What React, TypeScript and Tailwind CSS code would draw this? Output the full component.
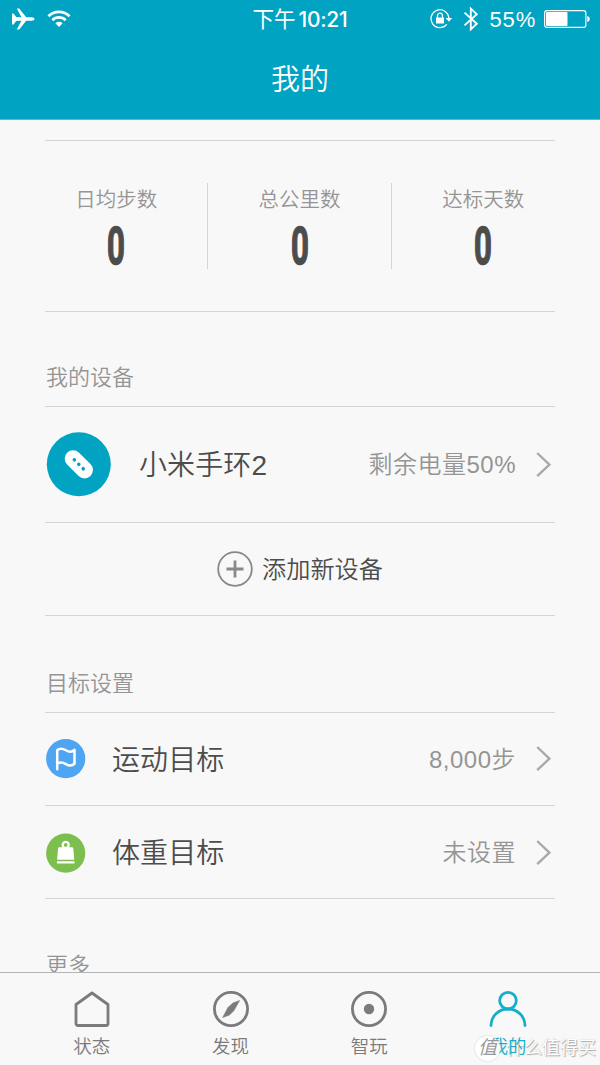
import type { ReactNode } from 'react';

const stats = [
  { label: '日均步数', value: '0' },
  { label: '总公里数', value: '0' },
  { label: '达标天数', value: '0' },
];

function AirplaneIcon() {
  return (
    <svg width="24" height="22" viewBox="0 0 24 22" fill="#fff">
      <path d="M1 5.500h1.600l2.600 3.600 5.200.2L5.800.4h2.400l7 8.900h5.600c1.600 0 2.700.8 2.700 1.700s-1.100 1.700-2.700 1.700h-5.600l-7 8.700H5.800l4.600-8.600-5.200.1-2.600 3.600H1V5.500z" />
    </svg>
  );
}

function WifiIcon() {
  return (
    <svg width="24" height="18" viewBox="0 0 24 18" fill="none" stroke="#fff">
      <path d="M1.400 6.300a15 15 0 0 1 21.200 0" strokeWidth="2.700" />
      <path d="M5.300 10.200a9.500 9.500 0 0 1 13.400 0" strokeWidth="2.700" />
      <path d="M8.400 13.300a5.100 5.100 0 0 1 7.200 0L12 17z" fill="#fff" stroke="none" />
    </svg>
  );
}

function RotationLockIcon() {
  return (
    <svg width="23" height="20" viewBox="0 0 23 20" fill="none">
      <path d="M16.800 15.300a8.900 8.900 0 1 1 2-6.300" stroke="#fff" strokeWidth="1.300" />
      <path d="M15.600 9h6.600l-3.300 3.700z" fill="#fff" />
      <rect x="6" y="8.500" width="8" height="6" rx=".5" fill="#fff" />
      <path d="M7.500 9V6.700a2.500 2.500 0 0 1 5 0V9" stroke="#fff" strokeWidth="1.300" />
    </svg>
  );
}

function BluetoothIcon() {
  return (
    <svg width="16" height="26" viewBox="0 0 16 26" fill="none" stroke="#fff" strokeWidth="1.900">
      <path d="M1.500 6.600l12.300 11.200-6 5.600V2.600l6 5.600L1.500 19.400" />
    </svg>
  );
}

function BatteryIcon() {
  return (
    <svg width="46" height="18" viewBox="0 0 46 18" fill="none">
      <rect x=".6" y=".6" width="41.300" height="16.800" rx="2.400" stroke="#fff" strokeWidth="1.100" />
      <rect x="2" y="2" width="21.500" height="14" rx="1" fill="#fff" />
      <path d="M43.300 6c1.600.3 2.400 1.500 2.400 3s-.8 2.700-2.400 3z" fill="#fff" />
    </svg>
  );
}

function Chevron() {
  return (
    <svg className="ml-[20px] mr-[4px] shrink-0" width="15" height="26" viewBox="0 0 15 26" fill="none" stroke="#a8a8a8" strokeWidth="2.300">
      <path d="M1.200 1L13.400 12.600 1.200 24.200" />
    </svg>
  );
}

function BandIcon() {
  return (
    <svg width="66" height="66" viewBox="0 0 66 66">
      <circle cx="33.800" cy="32.300" r="32" fill="#00a3c1" />
      <g transform="rotate(45 33.800 32.300)">
        <rect x="17.300" y="23.900" width="33" height="16.800" rx="8.400" fill="#fff" />
        <circle cx="27.500" cy="32.300" r="1.800" fill="#00a3c1" />
        <circle cx="33.800" cy="32.300" r="1.800" fill="#00a3c1" />
        <circle cx="40.100" cy="32.300" r="1.800" fill="#00a3c1" />
      </g>
    </svg>
  );
}

function FlagIcon() {
  return (
    <svg width="41" height="40" viewBox="0 0 41 40">
      <circle cx="20.700" cy="19.600" r="19.600" fill="#4fa5f2" />
      <path
        d="M12.200 30.300V11.300c2.600-2.300 5.700-1.800 8.700 0s6 2 8.600-.5v14c-2.600 2.300-5.600 2-8.600.3s-6.100-2.200-8.700-.3"
        fill="none"
        stroke="#fff"
        strokeWidth="2.500"
        strokeLinecap="round"
        strokeLinejoin="round"
      />
    </svg>
  );
}

function WeightIcon() {
  return (
    <svg width="41" height="40" viewBox="0 0 41 40">
      <circle cx="20.700" cy="20.200" r="19.600" fill="#7dbf4f" />
      <circle cx="20.700" cy="11.900" r="3" fill="none" stroke="#fff" strokeWidth="2.300" />
      <path d="M14.700 14.200h12c1 0 1.500.5 1.600 1.300l1 11.200H12.100l1-11.200c.1-.8.600-1.300 1.600-1.300z" fill="#fff" />
      <rect x="11.900" y="28.200" width="17.600" height="2.400" rx=".6" fill="#fff" />
    </svg>
  );
}

type RowProps = { icon: ReactNode; name: string; value: string; className: string };

function Row({ icon, name, value, className }: RowProps) {
  return (
    <div className={`flex items-center border-b border-[#d4d4d4] ${className}`}>
      {icon}
      <span className="pt-[3px] text-[28px] leading-9 tracking-[0.1px] text-[#4c4c4c]">{name}</span>
      <span className="ml-auto pt-px text-2xl leading-8 tracking-[0.5px] text-[#959595]">{value}</span>
      <Chevron />
    </div>
  );
}

function Tab({ label, active, children }: { label: string; active?: boolean; children: ReactNode }) {
  return (
    <div className={`flex w-[138.700px] flex-col items-center pt-[17px] ${active ? 'text-[#12aeca]' : 'text-[#7b7b7b]'}`}>
      <svg width="38" height="38" viewBox="0 0 38 38" fill="none" stroke="currentColor" strokeWidth="2.800">
        {children}
      </svg>
      <span className="relative z-10 mt-[6px] text-[18.500px] leading-[26px]">{label}</span>
    </div>
  );
}

export default function App() {
  return (
    <div className="relative flex h-[1065px] w-[600px] flex-col overflow-hidden bg-[#f8f8f8] font-['Liberation_Sans','Noto_Sans_CJK_SC',sans-serif] font-[350]">
      <header className="h-[120px] shrink-0 border-b border-[#4fbed3] bg-[#00a3c1] text-white">
        <div className="grid h-[38px] grid-cols-3 items-center">
          <div className="flex items-center gap-3 pl-[11px]">
            <AirplaneIcon />
            <WifiIcon />
          </div>
          <div className="flex items-center justify-center gap-[3px] pt-px text-[21.500px] font-normal leading-7">
            <span>下午</span>
            <span className="font-[Inter] text-[21px] font-medium tracking-[-0.300px]">10:21</span>
          </div>
          <div className="flex items-center justify-end pr-[10px]">
            <RotationLockIcon />
            <span className="ml-2.5 mr-[11px]"><BluetoothIcon /></span>
            <span className="mr-[8px] text-[22px] tracking-[0.8px]">55%</span>
            <BatteryIcon />
          </div>
        </div>
        <h1 className="mt-[21px] text-center text-[29px] leading-[42px]">我的</h1>
      </header>

      <main className="min-h-0 flex-1 overflow-hidden px-[45px] pt-5">
        <section className="h-[172px] border-y border-[#d4d4d4] pt-[42px]">
          <div className="-mx-5 grid h-[86px] grid-cols-3">
            {stats.map((item) => (
              <div key={item.label} className="flex h-[86px] flex-col items-center border-r border-[#d4d4d4] last:border-r-0">
                <span className="pt-px text-[20.500px] leading-8 text-[#959595]">{item.label}</span>
                <span className="mt-[5px] h-12 scale-x-[0.600] font-[Roboto] text-[52px] font-bold leading-[52px] text-[#4c4c4c] [-webkit-text-stroke:1.500px_#4c4c4c]">
                  {item.value}
                </span>
              </div>
            ))}
          </div>
        </section>

        <h2 className="h-[95px] border-b border-[#d4d4d4] pl-px pt-[50px] text-[22px] leading-8 text-[#959595]">我的设备</h2>
        <Row className="h-[116px]" icon={<span className="mr-[28px]"><BandIcon /></span>} name="小米手环2" value="剩余电量50%" />
        <div className="flex h-[93px] items-center justify-center border-b border-[#d4d4d4] text-[24.200px] text-[#4c4c4c]">
          <svg className="mr-[9px]" width="36" height="36" viewBox="0 0 36 36" fill="none" stroke="#888">
            <circle cx="18" cy="18" r="16.800" strokeWidth="1.800" />
            <path d="M9.500 18h17M18 9.500v17" strokeWidth="2.800" />
          </svg>
          <span className="pt-0.5">添加新设备</span>
        </div>

        <h2 className="h-[97px] border-b border-[#d4d4d4] pl-px pt-[52px] text-[22px] leading-8 text-[#959595]">目标设置</h2>
        <Row className="h-[93px]" icon={<span className="mr-[26px]"><FlagIcon /></span>} name="运动目标" value="8,000步" />
        <Row className="h-[93px] pt-px" icon={<span className="mr-[26px]"><WeightIcon /></span>} name="体重目标" value="未设置" />

        <h2 className="pl-px pt-[51px] text-[22px] leading-8 text-[#959595]">更多</h2>
      </main>

      <nav className="flex h-[93px] shrink-0 border-t border-[#b4b4b4] pl-[22.500px]">
        <Tab label="状态">
          <path d="M3 14.500L19 3l16 11.500V33.500a2 2 0 0 1-2 2H5a2 2 0 0 1-2-2z" strokeLinejoin="round" />
        </Tab>
        <Tab label="发现">
          <circle cx="19" cy="19" r="16.600" />
          <path d="M27.600 10.500L22 20.600l-4.500 4.300-6.800 2.700L16 17.400l4.800-4.300z" fill="currentColor" strokeWidth=".6" strokeLinejoin="round" />
        </Tab>
        <Tab label="智玩">
          <circle cx="19" cy="19" r="16.600" />
          <circle cx="19" cy="19" r="5.200" fill="currentColor" stroke="none" />
        </Tab>
        <Tab label="我的" active>
          <circle cx="19" cy="10.700" r="8.300" />
          <path d="M2 35.500a17 16.500 0 0 1 34 0" strokeLinecap="round" />
        </Tab>
      </nav>

      {/* site watermark around the last tab: badge on top of the label, text beneath it */}
      <div className="absolute left-[475px] top-[1034px] flex items-center whitespace-nowrap text-[18px] leading-[28px]">
        <span className="relative z-20 flex size-[25px] items-center justify-center rounded-full bg-white text-[19px] font-normal italic text-[#9a9a9a] shadow-[0_0_2px_#ccc]">值</span>
        <span className="ml-[6px] font-normal text-white [text-shadow:1px_1px_1px_#aaa,0_0_1px_#bbb]">什么值得买</span>
      </div>
    </div>
  );
}
